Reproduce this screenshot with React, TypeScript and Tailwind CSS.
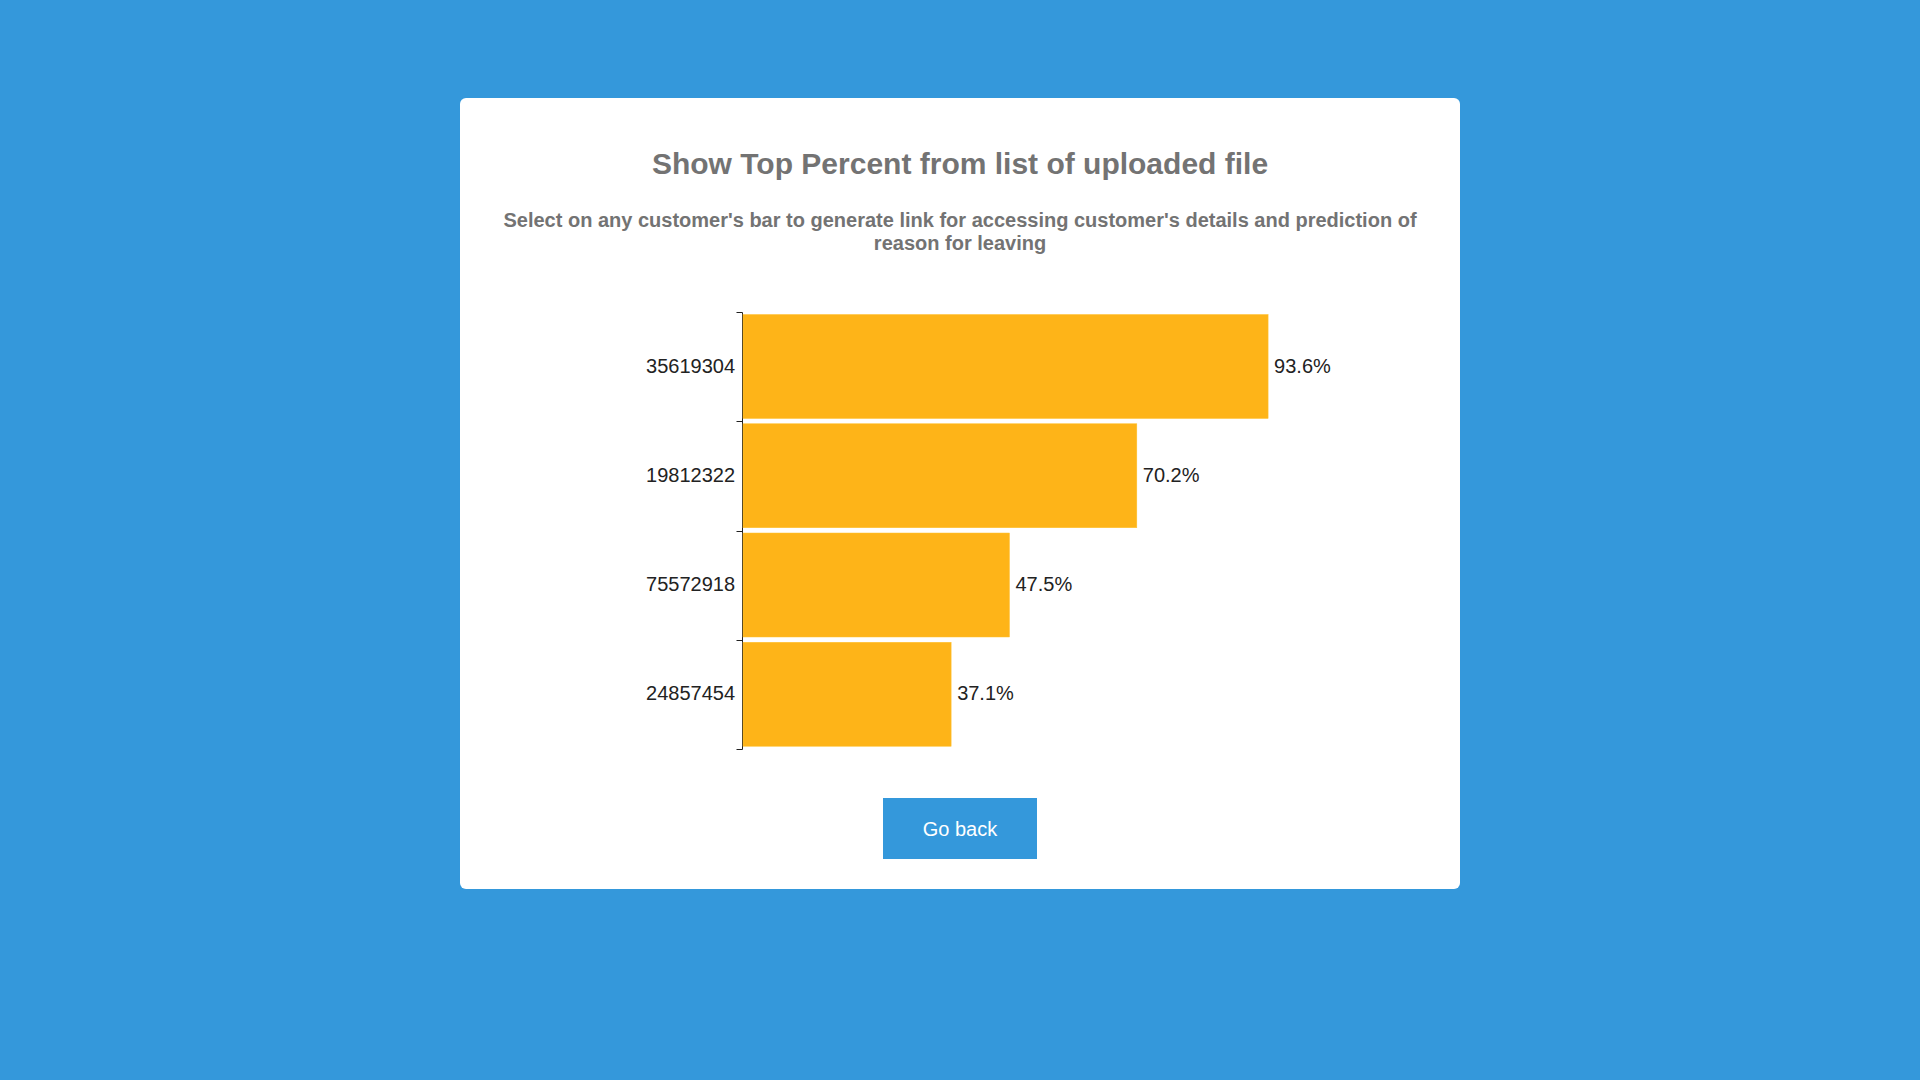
import React from "react";

const data = [
  { id: "35619304", pct: 93.6 },
  { id: "19812322", pct: 70.2 },
  { id: "75572918", pct: 47.5 },
  { id: "24857454", pct: 37.1 },
];

function Chart() {
  const axisX = 242.5;
  const top = 10;
  const bottom = 447;
  const step = (bottom - top) / data.length;
  const scale = 5.61;
  const barH = 104;
  return (
    <svg width={920} height={457} className="block mt-[47px]">
      <path
        d={`M${axisX - 6},${top + 0.5}H${axisX}V${bottom + 0.5}H${axisX - 6}`}
        stroke="#222"
        strokeWidth={1}
        fill="none"
      />
      {data.map((d, i) => {
        const y0 = top + step * i;
        const cy = y0 + step / 2;
        const w = d.pct * scale;
        return (
          <g key={d.id}>
            {i > 0 && (
              <line x1={axisX - 6} x2={axisX} y1={Math.round(y0) + 0.5} y2={Math.round(y0) + 0.5} stroke="#222" strokeWidth={1} />
            )}
            <rect x={243} y={y0 + 2.5} width={w} height={barH} fill="#feb418" stroke="#ffc233" strokeWidth={0.5} />
            <text
              x={235}
              y={cy - 1}
              dy="0.35em"
              textAnchor="end"
              fontSize={20}
              fill="#222"
              fontFamily="'Liberation Sans', Arial, sans-serif"
            >
              {d.id}
            </text>
            <text
              x={243 + w + 6}
              y={cy - 1}
              dy="0.35em"
              fontSize={20}
              fill="#222"
              fontFamily="'Liberation Sans', Arial, sans-serif"
            >
              {d.pct}%
            </text>
          </g>
        );
      })}
    </svg>
  );
}

export default function App() {
  return (
    <div className="w-full h-[1080px] bg-[#3498db] flex justify-center pt-[98px] font-['Liberation_Sans',Arial,sans-serif]">
      <div className="w-[1000px] h-fit bg-white rounded-[6px] px-10 pt-[49px] pb-[30px] flex flex-col items-center">
        <h1 className="text-[30px] leading-[34px] font-bold text-[#737373] text-center">
          Show Top Percent from list of uploaded file
        </h1>
        <p className="mt-[28px] text-[20px] leading-[23px] font-bold text-[#737373] text-center">
          Select on any customer's bar to generate link for accessing customer's details and prediction of reason for leaving
        </p>
        <Chart />
        <button className="mt-[39px] w-[154px] h-[61px] bg-[#3498db] text-white text-[20px]">
          Go back
        </button>
      </div>
    </div>
  );
}
